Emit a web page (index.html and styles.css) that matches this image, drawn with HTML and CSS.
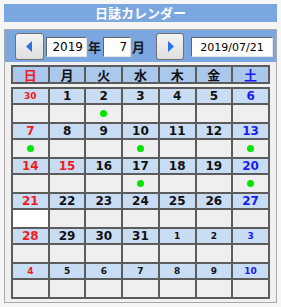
FILE: index.html
```html
<!DOCTYPE html>
<html lang="ja">
<head>
  <meta charset="UTF-8">
  <title>日誌カレンダー</title>
  <link rel="stylesheet" href="styles.css">
</head>
<body>
  <div class="title">日誌カレンダー</div>

  <div class="frame">
    <div class="nav">
      <button class="btn" type="button">
        <svg width="7" height="11" viewBox="0 0 7 11"><polygon points="6,0 6,11 0,5.5" fill="#2b6fe6"/></svg>
      </button>
      <input class="box year" type="text" value="2019"><span class="unit">年</span>
      <input class="box month" type="text" value="7"><span class="unit">月</span>
      <button class="btn next" type="button">
        <svg width="7" height="11" viewBox="0 0 7 11"><polygon points="1,0 1,11 7,5.5" fill="#2b6fe6"/></svg>
      </button>
      <input class="box date" type="text" value="2019/07/21">
    </div>

    <div class="panel">
      <table class="cal head">
        <tr>
          <th class="sun">日</th><th>月</th><th>火</th><th>水</th><th>木</th><th>金</th><th class="sat">土</th>
        </tr>
      </table>

      <table class="cal body" id="cal"></table>
    </div>
  </div>

  <script>
    // 表示する日付 (前月・翌月の日は小さく)
    const weeks = [
      [[30, 'o'], [1], [2], [3], [4], [5], [6]],
      [[7], [8], [9], [10], [11], [12], [13]],
      [[14], [15, 'h'], [16], [17], [18], [19], [20]],
      [[21], [22], [23], [24], [25], [26], [27]],
      [[28], [29], [30], [31], [1, 'o'], [2, 'o'], [3, 'o']],
      [[4, 'o'], [5, 'o'], [6, 'o'], [7, 'o'], [8, 'o'], [9, 'o'], [10, 'o']]
    ];
    const marks = { 2: 1, 7: 1, 10: 1, 13: 1, 17: 1, 20: 1 };
    const today = 21;

    const cal = document.getElementById('cal');
    let html = '';
    for (const w of weeks) {
      let top = '<tr class="days">';
      let bottom = '<tr class="notes">';
      w.forEach((d, i) => {
        let cls = [];
        if (i == 0 || d[1] == 'h') cls.push('sun');
        if (i == 6) cls.push('sat');
        if (d[1] == 'o') cls.push('other');
        top += '<td class="' + cls.join(' ') + '">' + d[0] + '</td>';
        const mine = d[1] != 'o';
        const dot = mine && marks[d[0]] ? '<span class="dot"></span>' : '';
        bottom += '<td' + (mine && d[0] == today ? ' class="today"' : '') + '>' + dot + '</td>';
      });
      html += top + '</tr>' + bottom + '</tr>';
    }
    cal.innerHTML = html;
  </script>
</body>
</html>
```

FILE: styles.css
```css
body {
  margin: 0;
  padding: 4px;
  background: #f6f6f6;
  font-family: "DejaVu Sans", "Noto Sans CJK JP", sans-serif;
  color: #111;
}
.title {
  width: 273px;
  height: 18px;
  line-height: 18px;
  background: #7ba7e0;
  color: #fff;
  font-weight: bold;
  font-size: 13px;
  text-align: center;
  font-family: "Noto Sans CJK JP", sans-serif;
}
.frame {
  width: 271px;
  margin-top: 7px;
  border: 1px solid #aaaaaa;
  background: #f0f0f0;
}
.nav {
  height: 32px;
  background: #7ba7e0;
  display: flex;
  align-items: center;
  padding-left: 10px;
}
.btn {
  width: 29px;
  height: 27px;
  margin: 1px 2px 0 0;
  padding: 0;
  border: 1px solid #707070;
  border-radius: 3px;
  background: linear-gradient(#f4f4f4, #dedede);
  display: flex;
  align-items: center;
  justify-content: center;
}
.btn.next {
  width: 28px;
  margin-left: 9px;
  margin-right: 7px;
}
.box {
  height: 20px;
  box-sizing: border-box;
  margin-top: 2px;
  padding: 0 3px;
  border: 1px solid #e4e4e4;
  border-top-color: #646464;
  border-left-color: #646464;
  background: #fff;
  font-family: "DejaVu Sans", sans-serif;
  font-size: 12px;
  color: #000;
  text-align: right;
}
.year { width: 41px; }
.month { width: 28px; }
.date {
  width: 82px;
  font-size: 11px;
  text-align: center;
}
.unit {
  font-family: "Noto Sans CJK JP", sans-serif;
  font-size: 13px;
  font-weight: bold;
  color: #1a1a1a;
  margin: 1px 2px 0 1px;
}
.panel {
  padding: 3px 5px 3px 6px;
}
.cal {
  width: 259px;
  border-collapse: collapse;
  table-layout: fixed;
}
.cal th, .cal td {
  border: 2px solid #5c5c5c;
  padding: 0;
  text-align: center;
  font-weight: bold;
}
.cal th {
  height: 15px;
  background: #a9c8ec;
  font-family: "Noto Sans CJK JP", sans-serif;
  font-size: 13px;
  line-height: 15px;
}
.head {
  margin-bottom: 3px;
}
.days td {
  height: 14px;
  background: #c8dcf3;
  font-size: 12px;
  line-height: 14px;
}
.days td.other {
  font-size: 9px;
}
.notes td {
  height: 17px;
  background: #efefef;
  line-height: 0;
}
.notes td.today {
  background: #fff;
}
.sun { color: #f21b1b; }
.sat { color: #1b1bf0; }
.dot {
  display: inline-block;
  width: 7px;
  height: 7px;
  border-radius: 50%;
  background: #00e600;
}
```
